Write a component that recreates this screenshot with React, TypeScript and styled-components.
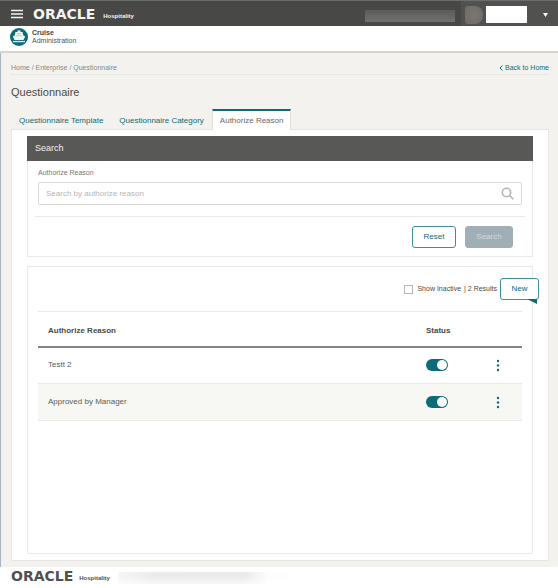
import React, { useState } from "react";
import styled, { createGlobalStyle } from "styled-components";

const teal = "#0b6b78";
const ink = "#4a4a48";
const line = "#e9e9e7";

const GlobalStyle = createGlobalStyle`
  *, *::before, *::after { box-sizing: border-box; }
  html { background: #fff; }
  body {
    margin: 0;
    color: ${ink};
    font-family: "Liberation Sans", Arial, sans-serif;
    font-size: 8px;
    line-height: 10px;
  }
  button, input { font: inherit; margin: 0; }
  a { text-decoration: none; color: inherit; }
`;

const Page = styled.div`
  display: flex;
  flex-direction: column;
  min-height: 100vh;
`;

const TopBar = styled.header`
  display: flex;
  align-items: stretch;
  height: 26px;
  padding-left: 11px;
  background: #484846;
  border-top: 1px solid #6a6d6a;
  color: #fff;
`;

const MenuButton = styled.button`
  display: flex;
  align-items: center;
  width: 12px;
  padding: 0;
  margin-right: 10px;
  border: 0;
  background: none;
  color: #f2f2f2;
`;

const Brand = styled.div<{ $small?: boolean }>`
  display: flex;
  align-items: center;
  gap: ${(p) => (p.$small ? 6 : 8)}px;
  color: ${(p) => (p.$small ? "#505050" : "#f4f4f4")};
`;

const Wordmark = styled.span`
  font-family: "DejaVu Sans", sans-serif;
  font-size: 14px;
  font-weight: bold;
  line-height: 16px;
`;

const Division = styled.span`
  padding-top: 4px;
  font-size: 6px;
  font-weight: bold;
`;

const Spacer = styled.div`
  flex: 1;
`;

const Redacted = styled.div`
  align-self: center;
  width: 90px;
  height: 12px;
  margin: 5px 6px 0 0;
  background: linear-gradient(#5b5b59, #70706e);
`;

const Account = styled.div`
  display: flex;
  align-items: center;
  width: 97px;
  padding: 2px 0 0 4px;
  background: #51514f;
`;

const Avatar = styled.div`
  width: 18px;
  height: 18px;
  margin-right: 3px;
  border-radius: 3px 8px 8px 3px;
  background: radial-gradient(#7b7672, #6d6a67);
`;

const NameBox = styled.div`
  width: 41px;
  height: 17px;
  background: #fff;
`;

const AccountMenu = styled.button`
  display: flex;
  padding: 0;
  margin-left: 16px;
  border: 0;
  background: none;
  color: #fff;
`;

const AppBar = styled.div`
  display: flex;
  align-items: center;
  gap: 4px;
  height: 27px;
  padding: 0 0 4px 10px;
  background: #fff;
  border-bottom: 2px solid #d5d5d0;
`;

const AppName = styled.div`
  font-size: 7px;
  line-height: 8px;
  color: #555;
  strong { display: block; color: #444; }
`;

const Main = styled.main`
  flex: 1;
  display: flex;
  flex-direction: column;
  padding: 8px 9px 6px 10px;
  background: #f3f2ee;
  border-left: 1px solid #a9b5c1;
`;

const CrumbBar = styled.div`
  display: flex;
  justify-content: space-between;
  align-items: center;
  height: 14px;
  border-bottom: 1px dotted #dcdcd8;
`;

const Crumbs = styled.nav`
  font-size: 7px;
  color: #888886;
`;

const BackLink = styled.a`
  display: flex;
  align-items: center;
  gap: 2px;
  padding-top: 1px;
  font-size: 7px;
  color: ${teal};
`;

const Title = styled.h1`
  margin: 10px 0 9px;
  font-size: 11px;
  font-weight: normal;
  line-height: 15px;
`;

const Tabs = styled.div`
  display: flex;
  position: relative;
  z-index: 1;
  margin-bottom: -1px;
`;

const Tab = styled.button<{ $active?: boolean }>`
  height: 21px;
  padding: 0 7px;
  border: 1px solid ${(p) => (p.$active ? "#dededb" : "transparent")};
  border-top: 2px solid ${(p) => (p.$active ? teal : "transparent")};
  border-bottom: 0;
  background: ${(p) => (p.$active ? "#fff" : "transparent")};
  color: ${(p) => (p.$active ? "#686866" : teal)};
  white-space: nowrap;
`;

const Content = styled.section`
  flex: 1;
  display: flex;
  flex-direction: column;
  gap: 9px;
  padding: 6px 15px 6px 15px;
  background: #fff;
  border: 1px solid #e5e5e1;
`;

const Panel = styled.div<{ $grow?: boolean }>`
  flex: ${(p) => (p.$grow ? 1 : "none")};
  border: 1px solid ${line};
  background: #fff;
`;

const PanelHeading = styled.h2`
  height: 25px;
  margin: -1px -1px 0;
  padding-left: 8px;
  background: #585856;
  color: #f2f2f2;
  font-size: 9px;
  font-weight: normal;
  line-height: 25px;
`;

const SearchForm = styled.form`
  padding: 7px 10px 8px;
`;

const FieldLabel = styled.label`
  display: block;
  margin-bottom: 4px;
  font-size: 7px;
  color: #777775;
`;

const SearchField = styled.div`
  display: flex;
  align-items: center;
  height: 23px;
  padding-right: 7px;
  border: 1px solid #d9d9d7;
  border-radius: 2px;
`;

const TextInput = styled.input`
  flex: 1;
  min-width: 0;
  height: 20px;
  padding: 0 7px;
  border: 0;
  outline: 0;
  background: none;
  color: ${ink};
  &::placeholder { color: #b6b6b4; opacity: 1; }
`;

const IconButton = styled.button`
  display: flex;
  padding: 0;
  border: 0;
  background: none;
  color: ${teal};
`;

const Actions = styled.div`
  display: flex;
  justify-content: flex-end;
  gap: 9px;
  margin: 11px -3px 0;
  padding: 9px 12px 0 0;
  border-top: 1px solid ${line};
`;

const Button = styled.button<{ $muted?: boolean; $wide?: boolean }>`
  width: ${(p) => (p.$wide ? 48 : 44)}px;
  height: 22px;
  padding: 0;
  border: 1px solid ${(p) => (p.$muted ? "#a0aeb5" : "#3d909a")};
  border-radius: 3px;
  background: ${(p) => (p.$muted ? "#a0aeb5" : "#fff")};
  color: ${(p) => (p.$muted ? "#d0dadd" : teal)};
`;

const Toolbar = styled.div`
  display: flex;
  justify-content: flex-end;
  align-items: center;
  gap: 3px;
  height: 44px;
  margin-right: -7px;
  font-size: 7px;
`;

const CheckLabel = styled.label`
  display: flex;
  align-items: center;
  gap: 4px;
`;

const CheckBox = styled.input`
  appearance: none;
  width: 9px;
  height: 9px;
  border: 1px solid #b5b5b3;
  background: #fff;
  &:checked { background: ${teal}; }
`;

const NewButton = styled(Button)`
  position: relative;
  width: 39px;
  font-size: 8px;
  &::after {
    content: "";
    position: absolute;
    right: 1px;
    top: 20px;
    border-top: 5px solid ${teal};
    border-left: 10px solid transparent;
  }
`;

const Table = styled.table`
  width: calc(100% - 20px);
  margin-left: 10px;
  border-collapse: collapse;
  table-layout: fixed;
  border-top: 1px solid ${line};
`;

const Head = styled.th<{ $width?: number }>`
  width: ${(p) => (p.$width ? `${p.$width}px` : "auto")};
  height: 35px;
  padding: 4px 0 0;
  border-bottom: 2px solid #858583;
  text-align: left;
  &:first-child { padding-left: 10px; }
`;

const Row = styled.tr`
  height: 37px;
  border-bottom: 1px solid ${line};
  &:nth-child(even) { background: #f7f8f3; }
`;

const Cell = styled.td`
  padding: 0;
  color: #5c5c5a;
  &:first-child { padding-left: 10px; }
  &:last-child > button { margin: 0 auto; }
`;

const Switch = styled.input`
  display: block;
  appearance: none;
  width: 22px;
  height: 12px;
  padding: 1px;
  border-radius: 6px;
  background: #a0aeb5;
  &::before {
    content: "";
    display: block;
    width: 10px;
    height: 10px;
    border-radius: 50%;
    background: #fff;
  }
  &:checked { background: ${teal}; }
  &:checked::before { margin-left: auto; }
`;

const Footer = styled.footer`
  display: flex;
  align-items: center;
  height: 21px;
  padding: 0 0 4px 11px;
  background: #fff;
`;

const FooterNote = styled.div`
  width: 170px;
  height: 12px;
  margin: 4px 0 0 8px;
  background: linear-gradient(90deg, #f6f6f6, #ececec 20%, #ebebeb 75%, #fdfdfd 88%);
  mask-image: linear-gradient(#000 40%, rgba(0, 0, 0, 0.35));
`;

const ShipIcon = () => (
  <svg width="18" height="18" viewBox="0 0 18 18" aria-hidden="true">
    <circle cx="9" cy="9" r="9" fill={teal} />
    <path d="M7.5 2.500h3v1.500h2l.8 3.500 1.900.9-1.700 3.600h-9L2.800 8.400l1.900-.9.8-3.500h2z" fill="#f5f9f9" />
    <path d="M6.800 5.600h4.400M5.800 8.200 9 7.200l3.200 1" stroke="#8bb5bb" strokeWidth=".7" fill="none" />
    <path d="M3 12.600q1.500 1 3 0 1.500 1 3 0 1.500 1 3 0 1.500 1 3 0v1.600H3z" fill="#d5e6e8" />
  </svg>
);

const rows = ["Testt 2", "Approved by Manager"];
const tabs = ["Questionnaire Template", "Questionnaire Category", "Authorize Reason"];

function ReasonRow({ name }: { name: string }) {
  const [active, setActive] = useState(true);
  return (
    <Row>
      <Cell>{name}</Cell>
      <Cell>
        <Switch type="checkbox" role="switch" aria-label={`${name} status`} checked={active} onChange={() => setActive(!active)} />
      </Cell>
      <Cell>
        <IconButton type="button" aria-label={`${name} actions`}>
          <svg width="4" height="13" viewBox="0 0 4 13" fill="currentColor">
            <circle cx="2" cy="2" r="1.200" />
            <circle cx="2" cy="6.500" r="1.200" />
            <circle cx="2" cy="11" r="1.200" />
          </svg>
        </IconButton>
      </Cell>
    </Row>
  );
}

export default function App() {
  const [tab, setTab] = useState(2);
  return (
    <Page>
      <GlobalStyle />
      <TopBar>
        <MenuButton type="button" aria-label="Menu">
          <svg width="12" height="10" viewBox="0 0 12 10" stroke="currentColor" strokeWidth="1.400">
            <path d="M0 1.500h12M0 5h12M0 8.500h12" />
          </svg>
        </MenuButton>
        <Brand>
          <Wordmark>ORACLE</Wordmark>
          <Division>Hospitality</Division>
        </Brand>
        <Spacer />
        <Redacted />
        <Account>
          <Avatar />
          <NameBox />
          <AccountMenu type="button" aria-label="Account menu">
            <svg width="5" height="4" viewBox="0 0 5 4" fill="currentColor"><path d="M0 0h5L2.500 4z" /></svg>
          </AccountMenu>
        </Account>
      </TopBar>
      <AppBar>
        <ShipIcon />
        <AppName><strong>Cruise</strong>Administration</AppName>
      </AppBar>
      <Main>
        <CrumbBar>
          <Crumbs aria-label="Breadcrumb">
            <a href="#home">Home</a> / <a href="#enterprise">Enterprise</a> / <a href="#questionnaire">Questionnaire</a>
          </Crumbs>
          <BackLink href="#home">
            <svg width="4" height="6" viewBox="0 0 4 6" fill="none" stroke="currentColor" strokeWidth="1"><path d="M3.500.5 1 3l2.500 2.500" /></svg>
            Back to Home
          </BackLink>
        </CrumbBar>
        <Title>Questionnaire</Title>
        <Tabs role="tablist">
          {tabs.map((t, i) => (
            <Tab key={t} type="button" role="tab" aria-selected={i === tab} $active={i === tab} onClick={() => setTab(i)}>{t}</Tab>
          ))}
        </Tabs>
        <Content>
          <Panel>
            <PanelHeading>Search</PanelHeading>
            <SearchForm onSubmit={(e) => e.preventDefault()}>
              <FieldLabel htmlFor="reason">Authorize Reason</FieldLabel>
              <SearchField>
                <TextInput id="reason" placeholder="Search by authorize reason" />
                <svg width="13" height="13" viewBox="0 0 13 13" fill="none" stroke="#b5b5b3" strokeWidth="1.600" aria-hidden="true">
                  <circle cx="5.500" cy="5.500" r="4.200" />
                  <path d="m8.600 8.600 3.700 3.700" />
                </svg>
              </SearchField>
              <Actions>
                <Button type="reset">Reset</Button>
                <Button type="submit" $muted $wide>Search</Button>
              </Actions>
            </SearchForm>
          </Panel>
          <Panel $grow>
            <Toolbar>
              <CheckLabel><CheckBox type="checkbox" />Show Inactive</CheckLabel>
              <span>| 2 Results</span>
              <NewButton type="button">New</NewButton>
            </Toolbar>
            <Table>
              <thead>
                <tr>
                  <Head scope="col">Authorize Reason</Head>
                  <Head scope="col" $width={47}>Status</Head>
                  <Head scope="col" $width={49} aria-label="Actions" />
                </tr>
              </thead>
              <tbody>
                {rows.map((r) => <ReasonRow key={r} name={r} />)}
              </tbody>
            </Table>
          </Panel>
        </Content>
      </Main>
      <Footer>
        <Brand $small>
          <Wordmark>ORACLE</Wordmark>
          <Division>Hospitality</Division>
        </Brand>
        <FooterNote />
      </Footer>
    </Page>
  );
}
